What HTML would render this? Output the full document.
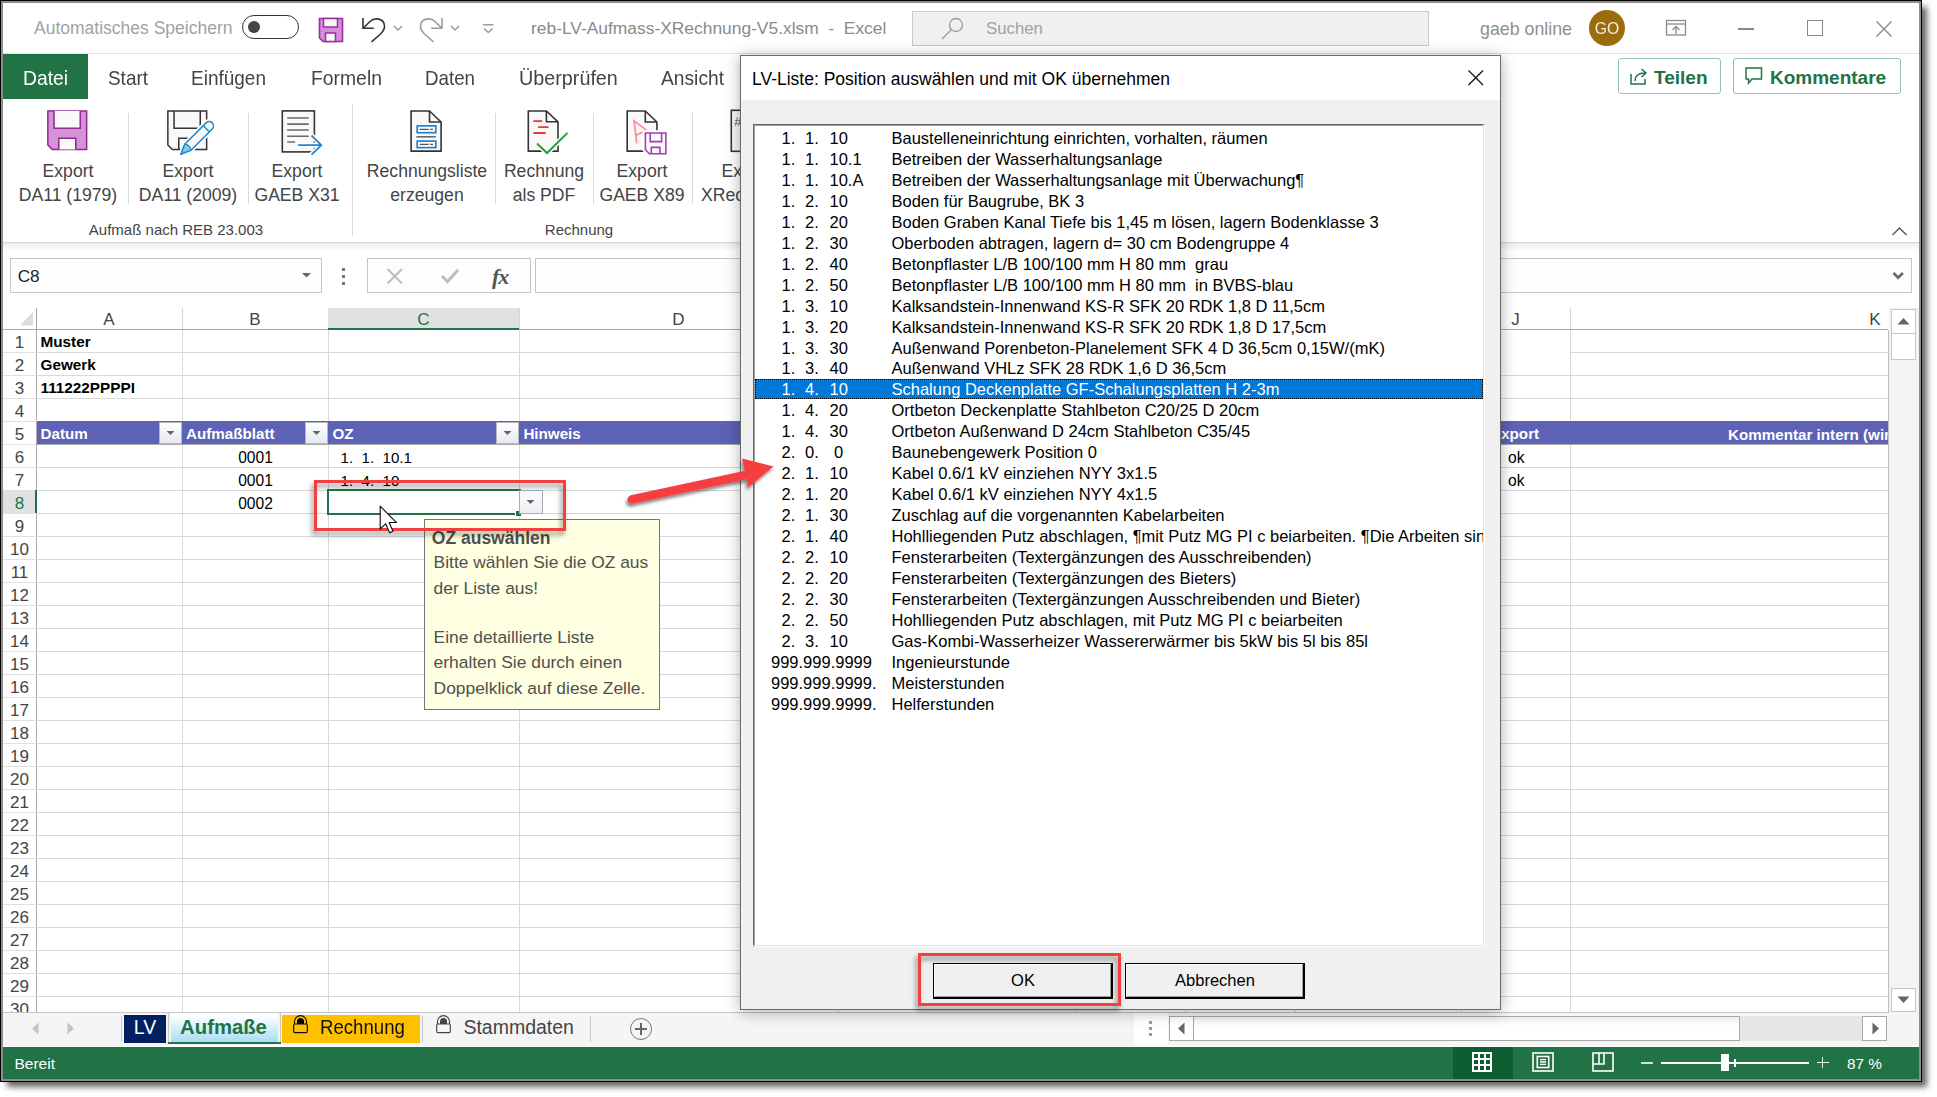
<!DOCTYPE html><html><head><meta charset="utf-8"><style>
html,body{margin:0;padding:0;}
body{width:1937px;height:1097px;position:relative;overflow:hidden;background:#fff;font-family:"Liberation Sans",sans-serif;}
.a{position:absolute;box-sizing:border-box;}
.t{position:absolute;white-space:pre;line-height:1;}
svg.a{overflow:visible;}
</style></head><body>
<div class="a" style="left:0px;top:0px;width:1922px;height:1082px;border:1px solid #000;box-shadow:6px 6px 6px -1px rgba(0,0,0,0.6);background:#fff;"></div>
<div class="a" style="left:1px;top:1px;width:1920px;height:1080px;border:2px solid #8f8c8c;"></div>
<div class="a" style="left:3px;top:53px;width:1916px;height:1px;background:#e1e1e1;"></div>
<div class="t" style="left:34.0px;top:20px;font-size:17.5px;color:#a2a2a2;font-weight:normal;">Automatisches Speichern</div>
<div class="a" style="left:242px;top:15px;width:57px;height:24px;border:1.5px solid #333;border-radius:12px;"></div>
<div class="a" style="left:248px;top:21px;width:12px;height:12px;border-radius:6px;background:#444;"></div>
<svg class="a" style="left:318px;top:17px;" width="26" height="26" viewBox="0 0 26 26"><path d="M1.5 1.5 H24.5 V24.5 H5 L1.5 21 Z" fill="#d48fdb" stroke="#9c2aa8" stroke-width="1.6"/><rect x="5.5" y="1.5" width="14" height="8.5" fill="#f7f7f7" stroke="#9c2aa8" stroke-width="1.5"/><rect x="7.5" y="16" width="10" height="8.5" fill="#f7f7f7" stroke="#9c2aa8" stroke-width="1.5"/></svg>
<svg class="a" style="left:360px;top:16px;" width="30" height="28" viewBox="0 0 30 28"><path d="M3 2 V12.3 H13.8" fill="none" stroke="#333" stroke-width="1.6"/><path d="M3 12.3 L10 5.5 C14 1.5 24.5 1.5 24.5 10.5 C24.5 14 22.5 16 20.5 18 L11.5 25.8" fill="none" stroke="#333" stroke-width="1.6"/></svg>
<svg class="a" style="left:392px;top:24px;" width="12" height="9" viewBox="0 0 12 9"><path d="M2 2 L6 6 L10 2" fill="none" stroke="#9a9a9a" stroke-width="1.5"/></svg>
<svg class="a" style="left:418px;top:16px;" width="30" height="28" viewBox="0 0 30 28"><path d="M24 2 V12.3 H13.2" fill="none" stroke="#9a9a9a" stroke-width="1.6"/><path d="M24 12.3 L17 5.5 C13 1.5 2.5 1.5 2.5 10.5 C2.5 14 4.5 16 6.5 18 L15.5 25.8" fill="none" stroke="#9a9a9a" stroke-width="1.6"/></svg>
<svg class="a" style="left:449px;top:24px;" width="12" height="9" viewBox="0 0 12 9"><path d="M2 2 L6 6 L10 2" fill="none" stroke="#9a9a9a" stroke-width="1.5"/></svg>
<svg class="a" style="left:481px;top:22px;" width="14" height="13" viewBox="0 0 14 13"><path d="M2 2.8 H12.5" stroke="#9a9a9a" stroke-width="1.5"/><path d="M3 6.5 L7.3 10.5 L11.5 6.5" fill="none" stroke="#9a9a9a" stroke-width="1.5"/></svg>
<div class="t" style="left:531.0px;top:20px;font-size:17.4px;color:#8a8a8a;font-weight:normal;">reb-LV-Aufmass-XRechnung-V5.xlsm  -  Excel</div>
<div class="a" style="left:912px;top:11px;width:517px;height:35px;background:#f0f0f0;border:1px solid #c9c9c9;"></div>
<svg class="a" style="left:940px;top:16px;" width="26" height="26" viewBox="0 0 26 26"><circle cx="16" cy="9" r="6.5" fill="none" stroke="#9a9a9a" stroke-width="1.3"/><path d="M11.5 13.5 L2 23" stroke="#9a9a9a" stroke-width="1.3"/></svg>
<div class="t" style="left:986.0px;top:21px;font-size:16.8px;color:#a0a0a0;font-weight:normal;">Suchen</div>
<div class="t" style="left:1480.0px;top:21px;font-size:17.8px;color:#8f8f8f;font-weight:normal;">gaeb online</div>
<div class="a" style="left:1589px;top:10px;width:36px;height:36px;border-radius:18px;background:#9c6c0c;"></div>
<div class="t" style="left:1207.0px;width:800px;text-align:center;top:20px;font-size:16.5px;color:#f4ecdc;font-weight:normal;transform:scaleX(0.95);transform-origin:center;">GO</div>
<svg class="a" style="left:1664px;top:18px;" width="24" height="20" viewBox="0 0 24 20"><rect x="2.5" y="2.5" width="19" height="14.5" fill="none" stroke="#8a8a8a" stroke-width="1.3"/><path d="M2.5 6 H21.5" stroke="#8a8a8a" stroke-width="1.3"/><path d="M12 16 V8.5 M8.5 12 L12 8.5 L15.5 12" fill="none" stroke="#8a8a8a" stroke-width="1.3"/></svg>
<div class="a" style="left:1738px;top:28px;width:16px;height:2px;background:#8a8a8a;"></div>
<div class="a" style="left:1807px;top:20px;width:16px;height:16px;border:1.5px solid #8a8a8a;"></div>
<svg class="a" style="left:1874px;top:19px;" width="20" height="20" viewBox="0 0 20 20"><path d="M2.5 2.5 L17.5 17.5 M17.5 2.5 L2.5 17.5" stroke="#8a8a8a" stroke-width="1.4"/></svg>
<div class="a" style="left:3px;top:54px;width:85px;height:45px;background:#217346;"></div>
<div class="t" style="left:22.6px;top:68px;font-size:20.8px;color:#fff;font-weight:normal;transform:scaleX(0.928);transform-origin:left;">Datei</div>
<div class="t" style="left:108.3px;top:68px;font-size:20.8px;color:#444;font-weight:normal;transform:scaleX(0.91);transform-origin:left;">Start</div>
<div class="t" style="left:191.4px;top:68px;font-size:20.8px;color:#444;font-weight:normal;transform:scaleX(0.913);transform-origin:left;">Einfügen</div>
<div class="t" style="left:310.7px;top:68px;font-size:20.8px;color:#444;font-weight:normal;transform:scaleX(0.93);transform-origin:left;">Formeln</div>
<div class="t" style="left:424.8px;top:68px;font-size:20.8px;color:#444;font-weight:normal;transform:scaleX(0.9);transform-origin:left;">Daten</div>
<div class="t" style="left:518.5px;top:68px;font-size:20.8px;color:#444;font-weight:normal;transform:scaleX(0.95);transform-origin:left;">Überprüfen</div>
<div class="t" style="left:661.3px;top:68px;font-size:20.8px;color:#444;font-weight:normal;transform:scaleX(0.924);transform-origin:left;">Ansicht</div>
<div class="a" style="left:1618px;top:58px;width:103px;height:36px;border:1px solid #8fc7a7;border-radius:3px;"></div>
<div class="a" style="left:1733px;top:58px;width:168px;height:36px;border:1px solid #8fc7a7;border-radius:3px;"></div>
<svg class="a" style="left:1628px;top:66px;" width="22" height="20" viewBox="0 0 22 20"><path d="M3 8 V18 H17 V13" fill="none" stroke="#217346" stroke-width="1.5"/><path d="M7 15 C7 9 11 7 17 7 M13.5 3 L18 7 L13.5 11" fill="none" stroke="#217346" stroke-width="1.5"/></svg>
<div class="t" style="left:1654.0px;top:68px;font-size:19px;color:#217346;font-weight:bold;">Teilen</div>
<svg class="a" style="left:1744px;top:66px;" width="20" height="20" viewBox="0 0 20 20"><path d="M2 2 H17.5 V13 H8 L4.5 17 V13 H2 Z" fill="none" stroke="#217346" stroke-width="1.5"/></svg>
<div class="t" style="left:1770.0px;top:68px;font-size:19px;color:#217346;font-weight:bold;">Kommentare</div>
<div class="a" style="left:3px;top:242px;width:1916px;height:1px;background:#d4d4d4;"></div>
<div class="a" style="left:3px;top:243px;width:1916px;height:8px;background:linear-gradient(#ececec,#fff);"></div>
<div class="t" style="left:-332.0px;width:800px;text-align:center;top:163px;font-size:17.6px;color:#444;font-weight:normal;">Export</div>
<div class="t" style="left:-332.0px;width:800px;text-align:center;top:187px;font-size:17.6px;color:#444;font-weight:normal;">DA11 (1979)</div>
<div class="t" style="left:-212.0px;width:800px;text-align:center;top:163px;font-size:17.6px;color:#444;font-weight:normal;">Export</div>
<div class="t" style="left:-212.0px;width:800px;text-align:center;top:187px;font-size:17.6px;color:#444;font-weight:normal;">DA11 (2009)</div>
<div class="t" style="left:-103.0px;width:800px;text-align:center;top:163px;font-size:17.6px;color:#444;font-weight:normal;">Export</div>
<div class="t" style="left:-103.0px;width:800px;text-align:center;top:187px;font-size:17.6px;color:#444;font-weight:normal;">GAEB X31</div>
<div class="t" style="left:27.0px;width:800px;text-align:center;top:163px;font-size:17.6px;color:#444;font-weight:normal;">Rechnungsliste</div>
<div class="t" style="left:27.0px;width:800px;text-align:center;top:187px;font-size:17.6px;color:#444;font-weight:normal;">erzeugen</div>
<div class="t" style="left:144.0px;width:800px;text-align:center;top:163px;font-size:17.6px;color:#444;font-weight:normal;">Rechnung</div>
<div class="t" style="left:144.0px;width:800px;text-align:center;top:187px;font-size:17.6px;color:#444;font-weight:normal;">als PDF</div>
<div class="t" style="left:242.0px;width:800px;text-align:center;top:163px;font-size:17.6px;color:#444;font-weight:normal;">Export</div>
<div class="t" style="left:242.0px;width:800px;text-align:center;top:187px;font-size:17.6px;color:#444;font-weight:normal;">GAEB X89</div>
<div class="t" style="left:347.0px;width:800px;text-align:center;top:163px;font-size:17.6px;color:#444;font-weight:normal;">Export</div>
<div class="t" style="left:347.0px;width:800px;text-align:center;top:187px;font-size:17.6px;color:#444;font-weight:normal;">XRechnung</div>
<div class="t" style="left:-224.0px;width:800px;text-align:center;top:222px;font-size:15px;color:#444;font-weight:normal;">Aufmaß nach REB 23.003</div>
<div class="t" style="left:179.0px;width:800px;text-align:center;top:222px;font-size:15px;color:#444;font-weight:normal;">Rechnung</div>
<div class="a" style="left:128px;top:113px;width:1px;height:91px;background:#dadada;"></div>
<div class="a" style="left:248px;top:113px;width:1px;height:91px;background:#dadada;"></div>
<div class="a" style="left:352px;top:104px;width:1px;height:132px;background:#dadada;"></div>
<div class="a" style="left:495px;top:113px;width:1px;height:91px;background:#dadada;"></div>
<div class="a" style="left:593px;top:113px;width:1px;height:91px;background:#dadada;"></div>
<div class="a" style="left:692px;top:113px;width:1px;height:91px;background:#dadada;"></div>
<svg class="a" style="left:1890px;top:224px;" width="20" height="14" viewBox="0 0 20 14"><path d="M2.5 11 L9.5 4 L16.5 11" fill="none" stroke="#555" stroke-width="1.4"/></svg>
<svg class="a" style="left:46px;top:109px;" width="43" height="43" viewBox="0 0 43 43"><path d="M1.85 1.95 H40.65 V40.45 H6.3 L1.85 36 Z" fill="#d492d9" stroke="#93278f" stroke-width="1.5"/><path d="M8.05 1.95 V19.15 H34.25 V1.95" fill="#f9f9f9" stroke="#93278f" stroke-width="1.5"/><path d="M12.75 40.45 V29.15 H29.75 V40.45" fill="#f9f9f9" stroke="#93278f" stroke-width="1.5"/></svg>
<svg class="a" style="left:166px;top:109px;" width="50" height="50" viewBox="0 0 50 50"><path d="M1.85 1.95 H40.65 V40.45 H6.3 L1.85 36 Z" fill="#f9f9f9" stroke="#333" stroke-width="1.5"/><path d="M8.05 1.95 V19.15 H34.25 V1.95" fill="none" stroke="#333" stroke-width="1.5"/><path d="M12.75 40.45 V29.15 H29.75 V40.45" fill="none" stroke="#333" stroke-width="1.5"/><g transform="translate(14.9,45.2) rotate(-45)"><path d="M0 0 L10 -4.3 H40 A4.3 4.3 0 0 1 40 4.3 H10 Z" fill="#fff" stroke="#fff" stroke-width="5"/><path d="M0 0 L10 -4.3 H40 A4.3 4.3 0 0 1 40 4.3 H10 Z" fill="#f9f9f9" stroke="#1e88d2" stroke-width="1.5" stroke-linejoin="round"/><path d="M0 0 L10 -4.3 Q13 0 10 4.3 Z" fill="#8cc4f0" stroke="#1e88d2" stroke-width="1.3"/><path d="M36 -4.3 V4.3" stroke="#1e88d2" stroke-width="1.5"/></g></svg>
<svg class="a" style="left:280px;top:109px;" width="45" height="48" viewBox="0 0 45 48"><rect x="2.3" y="1.9" width="32.1" height="41" fill="#f9f9f9" stroke="#333" stroke-width="1.6"/><path d="M7.2 9 H28.7 M7.2 15.1 H28.7 M7.2 21 H28.7 M7.2 27.2 H28.7 M7.2 33 H15" stroke="#6d6a64" stroke-width="1.6"/><path d="M18 36.2 H41.8 M31.5 26.5 L41.8 36.2 L31.5 45.7" fill="none" stroke="#fff" stroke-width="5"/><path d="M18 36.2 H41.3 M31.5 26.5 L41.3 36.2 L31.5 45.7" fill="none" stroke="#1e88d2" stroke-width="1.8"/></svg>
<svg class="a" style="left:405px;top:109px;" width="50" height="50" viewBox="0 0 50 50"><path d="M6.100000000000011 2.0000000000000027 H24.5 L36.09999999999998 13 V42.10000000000001 H6.100000000000011 Z" fill="#f9f9f9" stroke="#333" stroke-width="1.6" stroke-linejoin="miter"/><path d="M24.5 2.0000000000000027 V13 H36.09999999999998" fill="none" stroke="#333" stroke-width="1.6"/><rect x="12.2" y="16.9" width="18.6" height="6.8" fill="#fff" stroke="#1e84cf" stroke-width="1.7"/><rect x="12.2" y="32.1" width="18.6" height="6.5" fill="#fff" stroke="#1e84cf" stroke-width="1.7"/><path d="M14.6 20.3 H23.7 M25 20.3 H28 M14.6 35.3 H23.7 M25 35.3 H28" stroke="#555" stroke-width="1.3"/><path d="M11.4 27.8 H30.8" stroke="#6d6a64" stroke-width="1.6"/></svg>
<svg class="a" style="left:522px;top:109px;" width="50" height="50" viewBox="0 0 50 50"><path d="M6.3 2.0000000000000027 H24.399999999999977 L35.99999999999996 12.799999999999997 V42.10000000000001 H6.3 Z" fill="#f9f9f9" stroke="#333" stroke-width="1.6" stroke-linejoin="miter"/><path d="M24.399999999999977 2.0000000000000027 V12.799999999999997 H35.99999999999996" fill="none" stroke="#333" stroke-width="1.6"/><path d="M11.3 12.1 H20.3 M16.1 18.2 H26.5 M11.3 24 H23.6" stroke="#e83a3a" stroke-width="1.8"/><path d="M15 34.6 L25 44 L45.5 23.9" fill="none" stroke="#fff" stroke-width="5"/><path d="M15 34.6 L25 44 L45.5 23.9" fill="none" stroke="#2a9a3f" stroke-width="2"/></svg>
<svg class="a" style="left:621px;top:109px;" width="50" height="50" viewBox="0 0 50 50"><path d="M6.199999999999977 2.0000000000000027 H24.299999999999955 L35.90000000000005 13 V42.10000000000001 H6.199999999999977 Z" fill="#f9f9f9" stroke="#333" stroke-width="1.6" stroke-linejoin="miter"/><path d="M24.299999999999955 2.0000000000000027 V13 H35.90000000000005" fill="none" stroke="#333" stroke-width="1.6"/><path d="M15.8 34.3 L13 11.8 L25.3 21.1 M25.3 21.1 L15.3 26.3" fill="none" stroke="#f98b95" stroke-width="1.7" stroke-linejoin="miter"/><path d="M23.6 23.2 H45.7 V45.5 H28 L23.6 41 Z" fill="#fff" stroke="#fff" stroke-width="4"/><path d="M24.4 24 H44.9 V44.7 H28.4 L24.4 40.7 Z" fill="#fbfbfb" stroke="#a43cb4" stroke-width="1.6"/><path d="M29.2 24 V32.6 H40.6 V24 M30.3 44.7 V38.4 H38.9 V44.7" fill="none" stroke="#a43cb4" stroke-width="1.6"/></svg>
<svg class="a" style="left:730px;top:109px;" width="20" height="45" viewBox="0 0 20 45"><rect x="1.3" y="1.3" width="30" height="41" fill="#f9f9f9" stroke="#333" stroke-width="1.6"/><text x="4" y="17" font-family="Liberation Sans" font-size="13" font-style="italic" fill="#555">#</text></svg>
<div class="a" style="left:10px;top:258px;width:312px;height:35px;border:1px solid #c6c6c6;background:#fdfdfd;"></div>
<div class="t" style="left:17.7px;top:268px;font-size:17.2px;color:#222;font-weight:normal;">C8</div>
<svg class="a" style="left:300px;top:270px;" width="14" height="10" viewBox="0 0 14 10"><path d="M2 3 H11 L6.5 7.5 Z" fill="#666"/></svg>
<div class="a" style="left:342px;top:268px;width:3px;height:3px;background:#777;"></div>
<div class="a" style="left:342px;top:275px;width:3px;height:3px;background:#777;"></div>
<div class="a" style="left:342px;top:282px;width:3px;height:3px;background:#777;"></div>
<div class="a" style="left:367px;top:258px;width:164px;height:35px;border:1px solid #c6c6c6;background:#fdfdfd;"></div>
<svg class="a" style="left:385px;top:266px;" width="20" height="20" viewBox="0 0 20 20"><path d="M2.5 3 L17 17.5 M17 3 L2.5 17.5" stroke="#bdbdbd" stroke-width="2"/></svg>
<svg class="a" style="left:439px;top:266px;" width="22" height="20" viewBox="0 0 22 20"><path d="M3 10 L8.5 15.5 L19 4" fill="none" stroke="#bdbdbd" stroke-width="3"/></svg>
<div class="t" style="left:492.0px;top:266px;font-size:22px;color:#555;font-weight:bold;font-family:Liberation Serif;font-style:italic;letter-spacing:-1px;">fx</div>
<div class="a" style="left:535px;top:258px;width:1377px;height:35px;border:1px solid #c6c6c6;background:#fdfdfd;"></div>
<svg class="a" style="left:1892px;top:271px;" width="13" height="10" viewBox="0 0 13 10"><path d="M1.5 2 L6.2 6.7 L10.9 2" fill="none" stroke="#666" stroke-width="2.6"/></svg>
<div class="a" style="left:3px;top:308px;width:1885px;height:22px;background:#fff;"></div>
<div class="a" style="left:3px;top:329px;width:1885px;height:1px;background:#ababab;"></div>
<div class="a" style="left:36px;top:308px;width:1px;height:704px;background:#ababab;"></div>
<svg class="a" style="left:19px;top:311px;" width="15" height="16" viewBox="0 0 15 16"><path d="M14 1 V14.5 H1 Z" fill="#dcdcdc"/></svg>
<div class="a" style="left:182px;top:308px;width:1px;height:21px;background:#d4d4d4;"></div>
<div class="a" style="left:182px;top:330px;width:1px;height:682px;background:#d9d9d9;"></div>
<div class="a" style="left:328px;top:308px;width:1px;height:21px;background:#d4d4d4;"></div>
<div class="a" style="left:328px;top:330px;width:1px;height:682px;background:#d9d9d9;"></div>
<div class="a" style="left:519px;top:308px;width:1px;height:21px;background:#d4d4d4;"></div>
<div class="a" style="left:519px;top:330px;width:1px;height:682px;background:#d9d9d9;"></div>
<div class="a" style="left:838px;top:308px;width:1px;height:21px;background:#d4d4d4;"></div>
<div class="a" style="left:838px;top:330px;width:1px;height:682px;background:#d9d9d9;"></div>
<div class="a" style="left:1076px;top:308px;width:1px;height:21px;background:#d4d4d4;"></div>
<div class="a" style="left:1076px;top:330px;width:1px;height:682px;background:#d9d9d9;"></div>
<div class="a" style="left:1185px;top:308px;width:1px;height:21px;background:#d4d4d4;"></div>
<div class="a" style="left:1185px;top:330px;width:1px;height:682px;background:#d9d9d9;"></div>
<div class="a" style="left:1295px;top:308px;width:1px;height:21px;background:#d4d4d4;"></div>
<div class="a" style="left:1295px;top:330px;width:1px;height:682px;background:#d9d9d9;"></div>
<div class="a" style="left:1461px;top:308px;width:1px;height:21px;background:#d4d4d4;"></div>
<div class="a" style="left:1461px;top:330px;width:1px;height:682px;background:#d9d9d9;"></div>
<div class="a" style="left:1570px;top:308px;width:1px;height:21px;background:#d4d4d4;"></div>
<div class="a" style="left:1570px;top:330px;width:1px;height:682px;background:#d9d9d9;"></div>
<div class="a" style="left:1888px;top:330px;width:1px;height:682px;background:#bdbdbd;"></div>
<div class="a" style="left:328px;top:308px;width:191px;height:22px;background:#e1e1e1;"></div>
<div class="a" style="left:328px;top:328px;width:191px;height:2px;background:#217346;"></div>
<div class="t" style="left:-291.0px;width:800px;text-align:center;top:311px;font-size:17px;color:#444;font-weight:normal;">A</div>
<div class="t" style="left:-145.0px;width:800px;text-align:center;top:311px;font-size:17px;color:#444;font-weight:normal;">B</div>
<div class="t" style="left:23.5px;width:800px;text-align:center;top:311px;font-size:17px;color:#217346;font-weight:normal;">C</div>
<div class="t" style="left:278.5px;width:800px;text-align:center;top:311px;font-size:17px;color:#444;font-weight:normal;">D</div>
<div class="t" style="left:557.0px;width:800px;text-align:center;top:311px;font-size:17px;color:#444;font-weight:normal;">E</div>
<div class="t" style="left:730.5px;width:800px;text-align:center;top:311px;font-size:17px;color:#444;font-weight:normal;">F</div>
<div class="t" style="left:840.0px;width:800px;text-align:center;top:311px;font-size:17px;color:#444;font-weight:normal;">G</div>
<div class="t" style="left:978.0px;width:800px;text-align:center;top:311px;font-size:17px;color:#444;font-weight:normal;">H</div>
<div class="t" style="left:1115.5px;width:800px;text-align:center;top:311px;font-size:17px;color:#444;font-weight:normal;">J</div>
<div class="t" style="left:1475.0px;width:800px;text-align:center;top:311px;font-size:17px;color:#444;font-weight:normal;">K</div>
<div class="a" style="left:3px;top:352px;width:1885px;height:1px;background:#d9d9d9;"></div>
<div class="a" style="left:3px;top:352px;width:33px;height:1px;background:#e0e0e0;"></div>
<div class="t" style="left:-380.5px;width:800px;text-align:center;top:334px;font-size:17px;color:#444;font-weight:normal;">1</div>
<div class="a" style="left:3px;top:375px;width:1885px;height:1px;background:#d9d9d9;"></div>
<div class="a" style="left:3px;top:375px;width:33px;height:1px;background:#e0e0e0;"></div>
<div class="t" style="left:-380.5px;width:800px;text-align:center;top:357px;font-size:17px;color:#444;font-weight:normal;">2</div>
<div class="a" style="left:3px;top:398px;width:1885px;height:1px;background:#d9d9d9;"></div>
<div class="a" style="left:3px;top:398px;width:33px;height:1px;background:#e0e0e0;"></div>
<div class="t" style="left:-380.5px;width:800px;text-align:center;top:380px;font-size:17px;color:#444;font-weight:normal;">3</div>
<div class="a" style="left:3px;top:421px;width:1885px;height:1px;background:#d9d9d9;"></div>
<div class="a" style="left:3px;top:421px;width:33px;height:1px;background:#e0e0e0;"></div>
<div class="t" style="left:-380.5px;width:800px;text-align:center;top:403px;font-size:17px;color:#444;font-weight:normal;">4</div>
<div class="a" style="left:3px;top:444px;width:1885px;height:1px;background:#ababab;"></div>
<div class="a" style="left:3px;top:444px;width:33px;height:1px;background:#e0e0e0;"></div>
<div class="t" style="left:-380.5px;width:800px;text-align:center;top:426px;font-size:17px;color:#444;font-weight:normal;">5</div>
<div class="a" style="left:3px;top:467px;width:1885px;height:1px;background:#d9d9d9;"></div>
<div class="a" style="left:3px;top:467px;width:33px;height:1px;background:#e0e0e0;"></div>
<div class="t" style="left:-380.5px;width:800px;text-align:center;top:449px;font-size:17px;color:#444;font-weight:normal;">6</div>
<div class="a" style="left:3px;top:490px;width:1885px;height:1px;background:#d9d9d9;"></div>
<div class="a" style="left:3px;top:490px;width:33px;height:1px;background:#e0e0e0;"></div>
<div class="t" style="left:-380.5px;width:800px;text-align:center;top:472px;font-size:17px;color:#444;font-weight:normal;">7</div>
<div class="a" style="left:3px;top:513px;width:1885px;height:1px;background:#d9d9d9;"></div>
<div class="a" style="left:3px;top:513px;width:33px;height:1px;background:#e0e0e0;"></div>
<div class="t" style="left:-380.5px;width:800px;text-align:center;top:495px;font-size:17px;color:#217346;font-weight:normal;">8</div>
<div class="a" style="left:3px;top:536px;width:1885px;height:1px;background:#d9d9d9;"></div>
<div class="a" style="left:3px;top:536px;width:33px;height:1px;background:#e0e0e0;"></div>
<div class="t" style="left:-380.5px;width:800px;text-align:center;top:518px;font-size:17px;color:#444;font-weight:normal;">9</div>
<div class="a" style="left:3px;top:559px;width:1885px;height:1px;background:#d9d9d9;"></div>
<div class="a" style="left:3px;top:559px;width:33px;height:1px;background:#e0e0e0;"></div>
<div class="t" style="left:-380.5px;width:800px;text-align:center;top:541px;font-size:17px;color:#444;font-weight:normal;">10</div>
<div class="a" style="left:3px;top:582px;width:1885px;height:1px;background:#d9d9d9;"></div>
<div class="a" style="left:3px;top:582px;width:33px;height:1px;background:#e0e0e0;"></div>
<div class="t" style="left:-380.5px;width:800px;text-align:center;top:564px;font-size:17px;color:#444;font-weight:normal;">11</div>
<div class="a" style="left:3px;top:605px;width:1885px;height:1px;background:#d9d9d9;"></div>
<div class="a" style="left:3px;top:605px;width:33px;height:1px;background:#e0e0e0;"></div>
<div class="t" style="left:-380.5px;width:800px;text-align:center;top:587px;font-size:17px;color:#444;font-weight:normal;">12</div>
<div class="a" style="left:3px;top:628px;width:1885px;height:1px;background:#d9d9d9;"></div>
<div class="a" style="left:3px;top:628px;width:33px;height:1px;background:#e0e0e0;"></div>
<div class="t" style="left:-380.5px;width:800px;text-align:center;top:610px;font-size:17px;color:#444;font-weight:normal;">13</div>
<div class="a" style="left:3px;top:651px;width:1885px;height:1px;background:#d9d9d9;"></div>
<div class="a" style="left:3px;top:651px;width:33px;height:1px;background:#e0e0e0;"></div>
<div class="t" style="left:-380.5px;width:800px;text-align:center;top:633px;font-size:17px;color:#444;font-weight:normal;">14</div>
<div class="a" style="left:3px;top:674px;width:1885px;height:1px;background:#d9d9d9;"></div>
<div class="a" style="left:3px;top:674px;width:33px;height:1px;background:#e0e0e0;"></div>
<div class="t" style="left:-380.5px;width:800px;text-align:center;top:656px;font-size:17px;color:#444;font-weight:normal;">15</div>
<div class="a" style="left:3px;top:697px;width:1885px;height:1px;background:#d9d9d9;"></div>
<div class="a" style="left:3px;top:697px;width:33px;height:1px;background:#e0e0e0;"></div>
<div class="t" style="left:-380.5px;width:800px;text-align:center;top:679px;font-size:17px;color:#444;font-weight:normal;">16</div>
<div class="a" style="left:3px;top:720px;width:1885px;height:1px;background:#d9d9d9;"></div>
<div class="a" style="left:3px;top:720px;width:33px;height:1px;background:#e0e0e0;"></div>
<div class="t" style="left:-380.5px;width:800px;text-align:center;top:702px;font-size:17px;color:#444;font-weight:normal;">17</div>
<div class="a" style="left:3px;top:743px;width:1885px;height:1px;background:#d9d9d9;"></div>
<div class="a" style="left:3px;top:743px;width:33px;height:1px;background:#e0e0e0;"></div>
<div class="t" style="left:-380.5px;width:800px;text-align:center;top:725px;font-size:17px;color:#444;font-weight:normal;">18</div>
<div class="a" style="left:3px;top:766px;width:1885px;height:1px;background:#d9d9d9;"></div>
<div class="a" style="left:3px;top:766px;width:33px;height:1px;background:#e0e0e0;"></div>
<div class="t" style="left:-380.5px;width:800px;text-align:center;top:748px;font-size:17px;color:#444;font-weight:normal;">19</div>
<div class="a" style="left:3px;top:789px;width:1885px;height:1px;background:#d9d9d9;"></div>
<div class="a" style="left:3px;top:789px;width:33px;height:1px;background:#e0e0e0;"></div>
<div class="t" style="left:-380.5px;width:800px;text-align:center;top:771px;font-size:17px;color:#444;font-weight:normal;">20</div>
<div class="a" style="left:3px;top:812px;width:1885px;height:1px;background:#d9d9d9;"></div>
<div class="a" style="left:3px;top:812px;width:33px;height:1px;background:#e0e0e0;"></div>
<div class="t" style="left:-380.5px;width:800px;text-align:center;top:794px;font-size:17px;color:#444;font-weight:normal;">21</div>
<div class="a" style="left:3px;top:835px;width:1885px;height:1px;background:#d9d9d9;"></div>
<div class="a" style="left:3px;top:835px;width:33px;height:1px;background:#e0e0e0;"></div>
<div class="t" style="left:-380.5px;width:800px;text-align:center;top:817px;font-size:17px;color:#444;font-weight:normal;">22</div>
<div class="a" style="left:3px;top:858px;width:1885px;height:1px;background:#d9d9d9;"></div>
<div class="a" style="left:3px;top:858px;width:33px;height:1px;background:#e0e0e0;"></div>
<div class="t" style="left:-380.5px;width:800px;text-align:center;top:840px;font-size:17px;color:#444;font-weight:normal;">23</div>
<div class="a" style="left:3px;top:881px;width:1885px;height:1px;background:#d9d9d9;"></div>
<div class="a" style="left:3px;top:881px;width:33px;height:1px;background:#e0e0e0;"></div>
<div class="t" style="left:-380.5px;width:800px;text-align:center;top:863px;font-size:17px;color:#444;font-weight:normal;">24</div>
<div class="a" style="left:3px;top:904px;width:1885px;height:1px;background:#d9d9d9;"></div>
<div class="a" style="left:3px;top:904px;width:33px;height:1px;background:#e0e0e0;"></div>
<div class="t" style="left:-380.5px;width:800px;text-align:center;top:886px;font-size:17px;color:#444;font-weight:normal;">25</div>
<div class="a" style="left:3px;top:927px;width:1885px;height:1px;background:#d9d9d9;"></div>
<div class="a" style="left:3px;top:927px;width:33px;height:1px;background:#e0e0e0;"></div>
<div class="t" style="left:-380.5px;width:800px;text-align:center;top:909px;font-size:17px;color:#444;font-weight:normal;">26</div>
<div class="a" style="left:3px;top:950px;width:1885px;height:1px;background:#d9d9d9;"></div>
<div class="a" style="left:3px;top:950px;width:33px;height:1px;background:#e0e0e0;"></div>
<div class="t" style="left:-380.5px;width:800px;text-align:center;top:932px;font-size:17px;color:#444;font-weight:normal;">27</div>
<div class="a" style="left:3px;top:973px;width:1885px;height:1px;background:#d9d9d9;"></div>
<div class="a" style="left:3px;top:973px;width:33px;height:1px;background:#e0e0e0;"></div>
<div class="t" style="left:-380.5px;width:800px;text-align:center;top:955px;font-size:17px;color:#444;font-weight:normal;">28</div>
<div class="a" style="left:3px;top:996px;width:1885px;height:1px;background:#d9d9d9;"></div>
<div class="a" style="left:3px;top:996px;width:33px;height:1px;background:#e0e0e0;"></div>
<div class="t" style="left:-380.5px;width:800px;text-align:center;top:978px;font-size:17px;color:#444;font-weight:normal;">29</div>
<div class="a" style="left:3px;top:1019px;width:1885px;height:1px;background:#d9d9d9;"></div>
<div class="a" style="left:3px;top:1019px;width:33px;height:1px;background:#e0e0e0;"></div>
<div class="t" style="left:-380.5px;width:800px;text-align:center;top:1001px;font-size:17px;color:#444;font-weight:normal;">30</div>
<div class="a" style="left:1461px;top:352px;width:109px;height:1px;background:#fff;"></div>
<div class="a" style="left:3px;top:490px;width:33px;height:23px;background:#e1e1e1;"></div>
<div class="a" style="left:35px;top:490px;width:2px;height:23px;background:#217346;"></div>
<div class="t" style="left:-380.5px;width:800px;text-align:center;top:495px;font-size:17px;color:#217346;font-weight:normal;">8</div>
<div class="t" style="left:40.5px;top:334px;font-size:15.3px;color:#000;font-weight:bold;">Muster</div>
<div class="t" style="left:40.5px;top:357px;font-size:15.3px;color:#000;font-weight:bold;">Gewerk</div>
<div class="t" style="left:40.5px;top:380px;font-size:15.3px;color:#000;font-weight:bold;">111222PPPPI</div>
<div class="a" style="left:37px;top:421px;width:1851px;height:23px;background:#5c62b6;"></div>
<div class="a" style="left:159px;top:422px;width:23px;height:22px;background:linear-gradient(#ffffff,#e6e9f0);border:1px solid #b4b7bf;"></div>
<svg class="a" style="left:166px;top:430px;" width="10" height="7" viewBox="0 0 10 7"><path d="M0.5 1 H8.5 L4.5 5 Z" fill="#666"/></svg>
<div class="a" style="left:305px;top:422px;width:23px;height:22px;background:linear-gradient(#ffffff,#e6e9f0);border:1px solid #b4b7bf;"></div>
<svg class="a" style="left:312px;top:430px;" width="10" height="7" viewBox="0 0 10 7"><path d="M0.5 1 H8.5 L4.5 5 Z" fill="#666"/></svg>
<div class="a" style="left:496px;top:422px;width:23px;height:22px;background:linear-gradient(#ffffff,#e6e9f0);border:1px solid #b4b7bf;"></div>
<svg class="a" style="left:503px;top:430px;" width="10" height="7" viewBox="0 0 10 7"><path d="M0.5 1 H8.5 L4.5 5 Z" fill="#666"/></svg>
<div class="t" style="left:40.5px;top:426px;font-size:15.2px;color:#fff;font-weight:bold;">Datum</div>
<div class="t" style="left:186.0px;top:426px;font-size:15.2px;color:#fff;font-weight:bold;">Aufmaßblatt</div>
<div class="t" style="left:332.5px;top:426px;font-size:15.2px;color:#fff;font-weight:bold;">OZ</div>
<div class="t" style="left:523.4px;top:426px;font-size:15.2px;color:#fff;font-weight:bold;">Hinweis</div>
<div class="t" style="left:1491.0px;top:426px;font-size:15.2px;color:#fff;font-weight:bold;">Export</div>
<div class="a" style="left:1570px;top:421px;width:318px;height:23px;overflow:hidden;">
<div class="t" style="left:158.0px;top:6px;font-size:15.2px;color:#fff;font-weight:bold;">Kommentar intern (wird</div>
</div>
<div class="t" style="left:-144.5px;width:800px;text-align:center;top:450px;font-size:15.6px;color:#000;font-weight:normal;">0001</div>
<div class="t" style="left:-144.5px;width:800px;text-align:center;top:473px;font-size:15.6px;color:#000;font-weight:normal;">0001</div>
<div class="t" style="left:-144.5px;width:800px;text-align:center;top:496px;font-size:15.6px;color:#000;font-weight:normal;">0002</div>
<div class="t" style="left:340.6px;top:450px;font-size:15.1px;color:#000;font-weight:normal;">1.  1.  10.1</div>
<div class="t" style="left:340.6px;top:473px;font-size:15.1px;color:#000;font-weight:normal;">1.  4.  10</div>
<div class="t" style="left:1508.0px;top:450px;font-size:15.6px;color:#000;font-weight:normal;">ok</div>
<div class="t" style="left:1508.0px;top:473px;font-size:15.6px;color:#000;font-weight:normal;">ok</div>
<div class="a" style="left:327px;top:489px;width:194px;height:26px;border:2px solid #217346;"></div>
<div class="a" style="left:515px;top:510px;width:7px;height:7px;background:#217346;border:1px solid #fff;"></div>
<div class="a" style="left:519px;top:490px;width:24px;height:24px;background:linear-gradient(#fcfcfd,#eceef3);border:1px solid #a9adb8;"></div>
<svg class="a" style="left:526px;top:499px;" width="10" height="7" viewBox="0 0 10 7"><path d="M0.5 1 H8.5 L4.5 5 Z" fill="#666"/></svg>
<div class="a" style="left:1889px;top:308px;width:30px;height:704px;background:#f3f3f3;"></div>
<div class="a" style="left:1891px;top:309px;width:25px;height:25px;background:#fff;border:1px solid #c6c6c6;"></div>
<svg class="a" style="left:1896px;top:315px;" width="15" height="12" viewBox="0 0 15 12"><path d="M1.5 9.5 H13.5 L7.5 3 Z" fill="#666"/></svg>
<div class="a" style="left:1891px;top:333px;width:25px;height:27px;background:#fff;border:1px solid #c6c6c6;"></div>
<div class="a" style="left:1891px;top:988px;width:25px;height:24px;background:#fff;border:1px solid #c6c6c6;"></div>
<svg class="a" style="left:1896px;top:994px;" width="15" height="12" viewBox="0 0 15 12"><path d="M1.5 2.5 H13.5 L7.5 9 Z" fill="#666"/></svg>
<div class="a" style="left:3px;top:1012px;width:1916px;height:35px;background:#f5f5f5;"></div>
<div class="a" style="left:3px;top:1012px;width:1886px;height:1px;background:#c6c6c6;"></div>
<div class="a" style="left:3px;top:1046px;width:1916px;height:1px;background:#fff;"></div>
<svg class="a" style="left:31px;top:1022px;" width="9" height="13" viewBox="0 0 9 13"><path d="M7.5 0.5 V12.5 L1 6.5 Z" fill="#c4c4c4"/></svg>
<svg class="a" style="left:66px;top:1022px;" width="9" height="13" viewBox="0 0 9 13"><path d="M1.5 0.5 V12.5 L8 6.5 Z" fill="#c4c4c4"/></svg>
<div class="a" style="left:121px;top:1016px;width:1px;height:26px;background:#c6c6c6;"></div>
<div class="a" style="left:124px;top:1015px;width:42px;height:28px;background:#002060;"></div>
<div class="t" style="left:-255.0px;width:800px;text-align:center;top:1018px;font-size:19.5px;color:#fff;font-weight:normal;">LV</div>
<div class="a" style="left:168px;top:1012px;width:113px;height:32px;background:#f3f3f3;border:1px solid #c6c6c6;border-bottom:none;"></div>
<div class="a" style="left:171px;top:1013px;width:107px;height:29px;background:linear-gradient(#ffffff 10%,#a8dcf2);"></div>
<div class="a" style="left:168px;top:1042px;width:113px;height:2px;background:#217346;"></div>
<div class="t" style="left:-176.5px;width:800px;text-align:center;top:1017px;font-size:20.3px;color:#217346;font-weight:bold;">Aufmaße</div>
<div class="a" style="left:282px;top:1015px;width:138px;height:28px;background:#ffc000;"></div>
<svg class="a" style="left:292px;top:1014px;" width="17" height="20" viewBox="0 0 17 20"><path d="M2.5 10 V7.6 A6 6 0 0 1 14.5 7.6 V10" fill="none" stroke="#111" stroke-width="1.15"/><path d="M5 10 V7.6 A3.5 3.5 0 0 1 12 7.6 V10 Z" fill="#000"/><rect x="1.7" y="10" width="13.6" height="8.6" rx="1.2" fill="#ffc000" stroke="#111" stroke-width="1.15"/></svg>
<div class="t" style="left:320.4px;top:1018px;font-size:19.5px;color:#111;font-weight:normal;transform:scaleX(0.955);transform-origin:left;">Rechnung</div>
<div class="a" style="left:422px;top:1016px;width:1px;height:26px;background:#c6c6c6;"></div>
<svg class="a" style="left:435px;top:1014px;" width="17" height="20" viewBox="0 0 17 20"><path d="M2.5 10 V7.6 A6 6 0 0 1 14.5 7.6 V10" fill="none" stroke="#444" stroke-width="1.15"/><path d="M5 10 V7.6 A3.5 3.5 0 0 1 12 7.6 V10 Z" fill="#444"/><rect x="1.7" y="10" width="13.6" height="8.6" rx="1.2" fill="#f7f7f7" stroke="#444" stroke-width="1.15"/></svg>
<div class="t" style="left:463.4px;top:1018px;font-size:19.5px;color:#444;font-weight:normal;">Stammdaten</div>
<div class="a" style="left:590px;top:1016px;width:1px;height:26px;background:#c6c6c6;"></div>
<div class="a" style="left:630px;top:1018px;width:22px;height:22px;border-radius:11px;border:1.5px solid #777;"></div>
<div class="a" style="left:635px;top:1028px;width:12px;height:2px;background:#666;"></div>
<div class="a" style="left:640px;top:1023px;width:2px;height:12px;background:#666;"></div>
<div class="a" style="left:1134px;top:1013px;width:34px;height:33px;background:#fff;"></div>
<div class="a" style="left:1149px;top:1021px;width:3px;height:3px;background:#999;"></div>
<div class="a" style="left:1149px;top:1027px;width:3px;height:3px;background:#999;"></div>
<div class="a" style="left:1149px;top:1033px;width:3px;height:3px;background:#999;"></div>
<div class="a" style="left:1169px;top:1016px;width:718px;height:25px;background:#e6e6e6;"></div>
<div class="a" style="left:1169px;top:1016px;width:25px;height:25px;background:#fff;border:1px solid #a8a8a8;"></div>
<svg class="a" style="left:1177px;top:1022px;" width="9" height="13" viewBox="0 0 9 13"><path d="M7.5 0.5 V12.5 L1 6.5 Z" fill="#666"/></svg>
<div class="a" style="left:1193px;top:1016px;width:547px;height:25px;background:linear-gradient(#eeeeee,#ffffff 40%);border:1px solid #a8a8a8;"></div>
<div class="a" style="left:1862px;top:1016px;width:25px;height:25px;background:#fff;border:1px solid #a8a8a8;"></div>
<svg class="a" style="left:1871px;top:1022px;" width="9" height="13" viewBox="0 0 9 13"><path d="M1.5 0.5 V12.5 L8 6.5 Z" fill="#666"/></svg>
<div class="a" style="left:3px;top:1047px;width:1916px;height:32px;background:#217346;"></div>
<div class="t" style="left:14.5px;top:1056px;font-size:15.5px;color:#fff;font-weight:normal;">Bereit</div>
<div class="a" style="left:1453px;top:1047px;width:60px;height:32px;background:#0e5c31;"></div>
<svg class="a" style="left:1472px;top:1052px;" width="20" height="20" viewBox="0 0 20 20"><rect x="1" y="1" width="18" height="18" fill="none" stroke="#fff" stroke-width="2"/><path d="M7 1 V19 M13 1 V19 M1 7 H19 M1 13 H19" stroke="#fff" stroke-width="2"/></svg>
<svg class="a" style="left:1532px;top:1052px;" width="22" height="20" viewBox="0 0 22 20"><rect x="1" y="1" width="20" height="18" fill="none" stroke="#fff" stroke-width="1.6"/><rect x="5.3" y="4.5" width="11.4" height="11" fill="none" stroke="#fff" stroke-width="1.6"/><path d="M8 7.6 H14 M8 10 H14 M8 12.4 H14" stroke="#fff" stroke-width="1.3"/></svg>
<svg class="a" style="left:1592px;top:1052px;" width="22" height="20" viewBox="0 0 22 20"><rect x="1" y="1" width="20" height="18" fill="none" stroke="#fff" stroke-width="1.6"/><path d="M1 12 H12 V1 M7 1 V12" fill="none" stroke="#fff" stroke-width="1.6"/></svg>
<div class="a" style="left:1641px;top:1062px;width:12px;height:2px;background:#cfe3d6;"></div>
<div class="a" style="left:1661px;top:1062px;width:148px;height:2px;background:#fff;"></div>
<div class="a" style="left:1721px;top:1054px;width:8px;height:17px;background:#fff;"></div>
<div class="a" style="left:1734px;top:1059px;width:2px;height:8px;background:#fff;"></div>
<div class="a" style="left:1817px;top:1062px;width:12px;height:1px;background:#e8f1eb;"></div>
<div class="a" style="left:1822px;top:1057px;width:1px;height:11px;background:#e8f1eb;"></div>
<div class="t" style="left:1847.0px;top:1056px;font-size:15.3px;color:#fff;font-weight:normal;">87 %</div>
<div class="a" style="left:424px;top:519px;width:236px;height:191px;background:#ffffe1;border:1px solid #767676;"></div>
<div class="t" style="left:431.8px;top:530px;font-size:17.5px;color:#505050;font-weight:bold;">OZ auswählen</div>
<div class="t" style="left:433.6px;top:554px;font-size:17.4px;color:#505050;font-weight:normal;">Bitte wählen Sie die OZ aus</div>
<div class="t" style="left:433.6px;top:580px;font-size:17.4px;color:#505050;font-weight:normal;">der Liste aus!</div>
<div class="t" style="left:433.6px;top:629px;font-size:17.4px;color:#505050;font-weight:normal;">Eine detaillierte Liste</div>
<div class="t" style="left:433.6px;top:654px;font-size:17.4px;color:#505050;font-weight:normal;">erhalten Sie durch einen</div>
<div class="t" style="left:433.6px;top:680px;font-size:17.4px;color:#505050;font-weight:normal;">Doppelklick auf diese Zelle.</div>
<div class="a" style="left:314px;top:480px;width:252px;height:51px;border:3px solid #f23f3f;filter:drop-shadow(-2px 4px 2.5px rgba(0,0,0,0.45));"></div>
<svg class="a" style="left:379px;top:505px;" width="22" height="30" viewBox="0 0 22 30"><g transform="translate(1.2,1.2) scale(1.42)"><path d="M0 0 V16 L3.8 12.4 L6.6 18.6 L9 17.6 L6.3 11.5 H11.5 Z" fill="#fff" stroke="#111" stroke-width="0.8" stroke-linejoin="round"/></g></svg>
<div class="a" style="left:740px;top:55px;width:761px;height:955px;background:#f0f0f0;border:1px solid #6b6b6b;box-shadow:0 2px 14px rgba(0,0,0,0.32);"></div>
<div class="a" style="left:741px;top:56px;width:759px;height:44px;background:#fff;"></div>
<div class="t" style="left:752.0px;top:71px;font-size:17.5px;color:#000;font-weight:normal;">LV-Liste: Position auswählen und mit OK übernehmen</div>
<svg class="a" style="left:1467px;top:69px;" width="18" height="18" viewBox="0 0 18 18"><path d="M1.5 1.5 L16 16 M16 1.5 L1.5 16" stroke="#111" stroke-width="1.3"/></svg>
<div class="a" style="left:753px;top:124px;width:732px;height:823px;background:#fff;border-top:2px solid #a0a0a0;border-left:2px solid #a0a0a0;border-bottom:1px solid #fff;border-right:1px solid #fff;"></div>
<div class="a" style="left:753px;top:124px;width:731px;height:822px;border-top:1px solid #696969;border-left:1px solid #696969;border-bottom:1px solid #e3e3e3;border-right:1px solid #e3e3e3;"></div>
<div class="a" style="left:755px;top:126px;width:728px;height:819px;overflow:hidden;">
<div class="t" style="left:26.6px;top:4px;font-size:16.5px;color:#000;">1.</div>
<div class="t" style="left:50.0px;top:4px;font-size:16.5px;color:#000;">1.</div>
<div class="t" style="left:74.5px;top:4px;font-size:16.5px;color:#000;">10</div>
<div class="t" style="left:136.5px;top:4px;font-size:16.5px;color:#000;">Baustelleneinrichtung einrichten, vorhalten, räumen</div>
<div class="t" style="left:26.6px;top:25px;font-size:16.5px;color:#000;">1.</div>
<div class="t" style="left:50.0px;top:25px;font-size:16.5px;color:#000;">1.</div>
<div class="t" style="left:74.5px;top:25px;font-size:16.5px;color:#000;">10.1</div>
<div class="t" style="left:136.5px;top:25px;font-size:16.5px;color:#000;">Betreiben der Wasserhaltungsanlage</div>
<div class="t" style="left:26.6px;top:46px;font-size:16.5px;color:#000;">1.</div>
<div class="t" style="left:50.0px;top:46px;font-size:16.5px;color:#000;">1.</div>
<div class="t" style="left:74.5px;top:46px;font-size:16.5px;color:#000;">10.A</div>
<div class="t" style="left:136.5px;top:46px;font-size:16.5px;color:#000;">Betreiben der Wasserhaltungsanlage mit Überwachung¶</div>
<div class="t" style="left:26.6px;top:67px;font-size:16.5px;color:#000;">1.</div>
<div class="t" style="left:50.0px;top:67px;font-size:16.5px;color:#000;">2.</div>
<div class="t" style="left:74.5px;top:67px;font-size:16.5px;color:#000;">10</div>
<div class="t" style="left:136.5px;top:67px;font-size:16.5px;color:#000;">Boden für Baugrube, BK 3</div>
<div class="t" style="left:26.6px;top:88px;font-size:16.5px;color:#000;">1.</div>
<div class="t" style="left:50.0px;top:88px;font-size:16.5px;color:#000;">2.</div>
<div class="t" style="left:74.5px;top:88px;font-size:16.5px;color:#000;">20</div>
<div class="t" style="left:136.5px;top:88px;font-size:16.5px;color:#000;">Boden Graben Kanal Tiefe bis 1,45 m lösen, lagern Bodenklasse 3</div>
<div class="t" style="left:26.6px;top:109px;font-size:16.5px;color:#000;">1.</div>
<div class="t" style="left:50.0px;top:109px;font-size:16.5px;color:#000;">2.</div>
<div class="t" style="left:74.5px;top:109px;font-size:16.5px;color:#000;">30</div>
<div class="t" style="left:136.5px;top:109px;font-size:16.5px;color:#000;">Oberboden abtragen, lagern d= 30 cm Bodengruppe 4</div>
<div class="t" style="left:26.6px;top:130px;font-size:16.5px;color:#000;">1.</div>
<div class="t" style="left:50.0px;top:130px;font-size:16.5px;color:#000;">2.</div>
<div class="t" style="left:74.5px;top:130px;font-size:16.5px;color:#000;">40</div>
<div class="t" style="left:136.5px;top:130px;font-size:16.5px;color:#000;">Betonpflaster L/B 100/100 mm H 80 mm  grau</div>
<div class="t" style="left:26.6px;top:151px;font-size:16.5px;color:#000;">1.</div>
<div class="t" style="left:50.0px;top:151px;font-size:16.5px;color:#000;">2.</div>
<div class="t" style="left:74.5px;top:151px;font-size:16.5px;color:#000;">50</div>
<div class="t" style="left:136.5px;top:151px;font-size:16.5px;color:#000;">Betonpflaster L/B 100/100 mm H 80 mm  in BVBS-blau</div>
<div class="t" style="left:26.6px;top:172px;font-size:16.5px;color:#000;">1.</div>
<div class="t" style="left:50.0px;top:172px;font-size:16.5px;color:#000;">3.</div>
<div class="t" style="left:74.5px;top:172px;font-size:16.5px;color:#000;">10</div>
<div class="t" style="left:136.5px;top:172px;font-size:16.5px;color:#000;">Kalksandstein-Innenwand KS-R SFK 20 RDK 1,8 D 11,5cm</div>
<div class="t" style="left:26.6px;top:193px;font-size:16.5px;color:#000;">1.</div>
<div class="t" style="left:50.0px;top:193px;font-size:16.5px;color:#000;">3.</div>
<div class="t" style="left:74.5px;top:193px;font-size:16.5px;color:#000;">20</div>
<div class="t" style="left:136.5px;top:193px;font-size:16.5px;color:#000;">Kalksandstein-Innenwand KS-R SFK 20 RDK 1,8 D 17,5cm</div>
<div class="t" style="left:26.6px;top:214px;font-size:16.5px;color:#000;">1.</div>
<div class="t" style="left:50.0px;top:214px;font-size:16.5px;color:#000;">3.</div>
<div class="t" style="left:74.5px;top:214px;font-size:16.5px;color:#000;">30</div>
<div class="t" style="left:136.5px;top:214px;font-size:16.5px;color:#000;">Außenwand Porenbeton-Planelement SFK 4 D 36,5cm 0,15W/(mK)</div>
<div class="t" style="left:26.6px;top:234px;font-size:16.5px;color:#000;">1.</div>
<div class="t" style="left:50.0px;top:234px;font-size:16.5px;color:#000;">3.</div>
<div class="t" style="left:74.5px;top:234px;font-size:16.5px;color:#000;">40</div>
<div class="t" style="left:136.5px;top:234px;font-size:16.5px;color:#000;">Außenwand VHLz SFK 28 RDK 1,6 D 36,5cm</div>
<div class="a" style="left:0px;top:253px;width:728px;height:20px;background:#0078d7;outline:1px dotted #000;outline-offset:-1px;"></div>
<div class="t" style="left:26.6px;top:255px;font-size:16.5px;color:#fff;">1.</div>
<div class="t" style="left:50.0px;top:255px;font-size:16.5px;color:#fff;">4.</div>
<div class="t" style="left:74.5px;top:255px;font-size:16.5px;color:#fff;">10</div>
<div class="t" style="left:136.5px;top:255px;font-size:16.5px;color:#fff;">Schalung Deckenplatte GF-Schalungsplatten H 2-3m</div>
<div class="t" style="left:26.6px;top:276px;font-size:16.5px;color:#000;">1.</div>
<div class="t" style="left:50.0px;top:276px;font-size:16.5px;color:#000;">4.</div>
<div class="t" style="left:74.5px;top:276px;font-size:16.5px;color:#000;">20</div>
<div class="t" style="left:136.5px;top:276px;font-size:16.5px;color:#000;">Ortbeton Deckenplatte Stahlbeton C20/25 D 20cm</div>
<div class="t" style="left:26.6px;top:297px;font-size:16.5px;color:#000;">1.</div>
<div class="t" style="left:50.0px;top:297px;font-size:16.5px;color:#000;">4.</div>
<div class="t" style="left:74.5px;top:297px;font-size:16.5px;color:#000;">30</div>
<div class="t" style="left:136.5px;top:297px;font-size:16.5px;color:#000;">Ortbeton Außenwand D 24cm Stahlbeton C35/45</div>
<div class="t" style="left:26.6px;top:318px;font-size:16.5px;color:#000;">2.</div>
<div class="t" style="left:50.0px;top:318px;font-size:16.5px;color:#000;">0.</div>
<div class="t" style="left:74.5px;top:318px;font-size:16.5px;color:#000;"> 0</div>
<div class="t" style="left:136.5px;top:318px;font-size:16.5px;color:#000;">Baunebengewerk Position 0</div>
<div class="t" style="left:26.6px;top:339px;font-size:16.5px;color:#000;">2.</div>
<div class="t" style="left:50.0px;top:339px;font-size:16.5px;color:#000;">1.</div>
<div class="t" style="left:74.5px;top:339px;font-size:16.5px;color:#000;">10</div>
<div class="t" style="left:136.5px;top:339px;font-size:16.5px;color:#000;">Kabel 0.6/1 kV einziehen NYY 3x1.5</div>
<div class="t" style="left:26.6px;top:360px;font-size:16.5px;color:#000;">2.</div>
<div class="t" style="left:50.0px;top:360px;font-size:16.5px;color:#000;">1.</div>
<div class="t" style="left:74.5px;top:360px;font-size:16.5px;color:#000;">20</div>
<div class="t" style="left:136.5px;top:360px;font-size:16.5px;color:#000;">Kabel 0.6/1 kV einziehen NYY 4x1.5</div>
<div class="t" style="left:26.6px;top:381px;font-size:16.5px;color:#000;">2.</div>
<div class="t" style="left:50.0px;top:381px;font-size:16.5px;color:#000;">1.</div>
<div class="t" style="left:74.5px;top:381px;font-size:16.5px;color:#000;">30</div>
<div class="t" style="left:136.5px;top:381px;font-size:16.5px;color:#000;">Zuschlag auf die vorgenannten Kabelarbeiten</div>
<div class="t" style="left:26.6px;top:402px;font-size:16.5px;color:#000;">2.</div>
<div class="t" style="left:50.0px;top:402px;font-size:16.5px;color:#000;">1.</div>
<div class="t" style="left:74.5px;top:402px;font-size:16.5px;color:#000;">40</div>
<div class="t" style="left:136.5px;top:402px;font-size:16.5px;color:#000;">Hohlliegenden Putz abschlagen, ¶mit Putz MG PI c beiarbeiten. ¶Die Arbeiten sind</div>
<div class="t" style="left:26.6px;top:423px;font-size:16.5px;color:#000;">2.</div>
<div class="t" style="left:50.0px;top:423px;font-size:16.5px;color:#000;">2.</div>
<div class="t" style="left:74.5px;top:423px;font-size:16.5px;color:#000;">10</div>
<div class="t" style="left:136.5px;top:423px;font-size:16.5px;color:#000;">Fensterarbeiten (Textergänzungen des Ausschreibenden)</div>
<div class="t" style="left:26.6px;top:444px;font-size:16.5px;color:#000;">2.</div>
<div class="t" style="left:50.0px;top:444px;font-size:16.5px;color:#000;">2.</div>
<div class="t" style="left:74.5px;top:444px;font-size:16.5px;color:#000;">20</div>
<div class="t" style="left:136.5px;top:444px;font-size:16.5px;color:#000;">Fensterarbeiten (Textergänzungen des Bieters)</div>
<div class="t" style="left:26.6px;top:465px;font-size:16.5px;color:#000;">2.</div>
<div class="t" style="left:50.0px;top:465px;font-size:16.5px;color:#000;">2.</div>
<div class="t" style="left:74.5px;top:465px;font-size:16.5px;color:#000;">30</div>
<div class="t" style="left:136.5px;top:465px;font-size:16.5px;color:#000;">Fensterarbeiten (Textergänzungen Ausschreibenden und Bieter)</div>
<div class="t" style="left:26.6px;top:486px;font-size:16.5px;color:#000;">2.</div>
<div class="t" style="left:50.0px;top:486px;font-size:16.5px;color:#000;">2.</div>
<div class="t" style="left:74.5px;top:486px;font-size:16.5px;color:#000;">50</div>
<div class="t" style="left:136.5px;top:486px;font-size:16.5px;color:#000;">Hohlliegenden Putz abschlagen, mit Putz MG PI c beiarbeiten</div>
<div class="t" style="left:26.6px;top:507px;font-size:16.5px;color:#000;">2.</div>
<div class="t" style="left:50.0px;top:507px;font-size:16.5px;color:#000;">3.</div>
<div class="t" style="left:74.5px;top:507px;font-size:16.5px;color:#000;">10</div>
<div class="t" style="left:136.5px;top:507px;font-size:16.5px;color:#000;">Gas-Kombi-Wasserheizer Wassererwärmer bis 5kW bis 5l bis 85l</div>
<div class="t" style="left:16.0px;top:528px;font-size:16.5px;color:#000;">999.999.9999</div>
<div class="t" style="left:136.5px;top:528px;font-size:16.5px;color:#000;">Ingenieurstunde</div>
<div class="t" style="left:16.0px;top:549px;font-size:16.5px;color:#000;">999.999.9999.</div>
<div class="t" style="left:136.5px;top:549px;font-size:16.5px;color:#000;">Meisterstunden</div>
<div class="t" style="left:16.0px;top:570px;font-size:16.5px;color:#000;">999.999.9999.</div>
<div class="t" style="left:136.5px;top:570px;font-size:16.5px;color:#000;">Helferstunden</div>
</div>
<div class="a" style="left:933px;top:963px;width:180px;height:36px;background:#f0f0f0;border-top:1px solid #fff;border-left:1px solid #fff;border-right:2px solid #000;border-bottom:2px solid #000;outline:1px solid #000;outline-offset:-1px;"></div>
<div class="a" style="left:934px;top:964px;width:177px;height:33px;border-top:1px solid #fff;border-left:1px solid #fff;border-right:1px solid #a0a0a0;border-bottom:1px solid #a0a0a0;"></div>
<div class="t" style="left:623.0px;width:800px;text-align:center;top:972px;font-size:16.5px;color:#000;font-weight:normal;">OK</div>
<div class="a" style="left:1125px;top:963px;width:180px;height:36px;background:#f0f0f0;border-top:1px solid #fff;border-left:1px solid #fff;border-right:2px solid #000;border-bottom:2px solid #000;outline:1px solid #000;outline-offset:-1px;"></div>
<div class="a" style="left:1126px;top:964px;width:177px;height:33px;border-top:1px solid #fff;border-left:1px solid #fff;border-right:1px solid #a0a0a0;border-bottom:1px solid #a0a0a0;"></div>
<div class="t" style="left:815.0px;width:800px;text-align:center;top:972px;font-size:16.5px;color:#000;font-weight:normal;">Abbrechen</div>
<div class="a" style="left:918px;top:953px;width:203px;height:53px;border:3px solid #f23f3f;filter:drop-shadow(-2px 4px 2.5px rgba(0,0,0,0.45));"></div>
<svg class="a" style="left:620px;top:450px;" width="170" height="65" viewBox="0 0 170 65"><defs><filter id="sh" x="-20%" y="-50%" width="140%" height="200%"><feDropShadow dx="-1.5" dy="3" stdDeviation="1.8" flood-color="#000" flood-opacity="0.45"/></filter></defs><g filter="url(#sh)"><path d="M11.8 49.5 L126 25" stroke="#f63c40" stroke-width="8.5" stroke-linecap="round"/><path d="M122 8.6 L153.6 16.5 L128.5 37 Z" fill="#f63c40"/></g></svg>
</body></html>
